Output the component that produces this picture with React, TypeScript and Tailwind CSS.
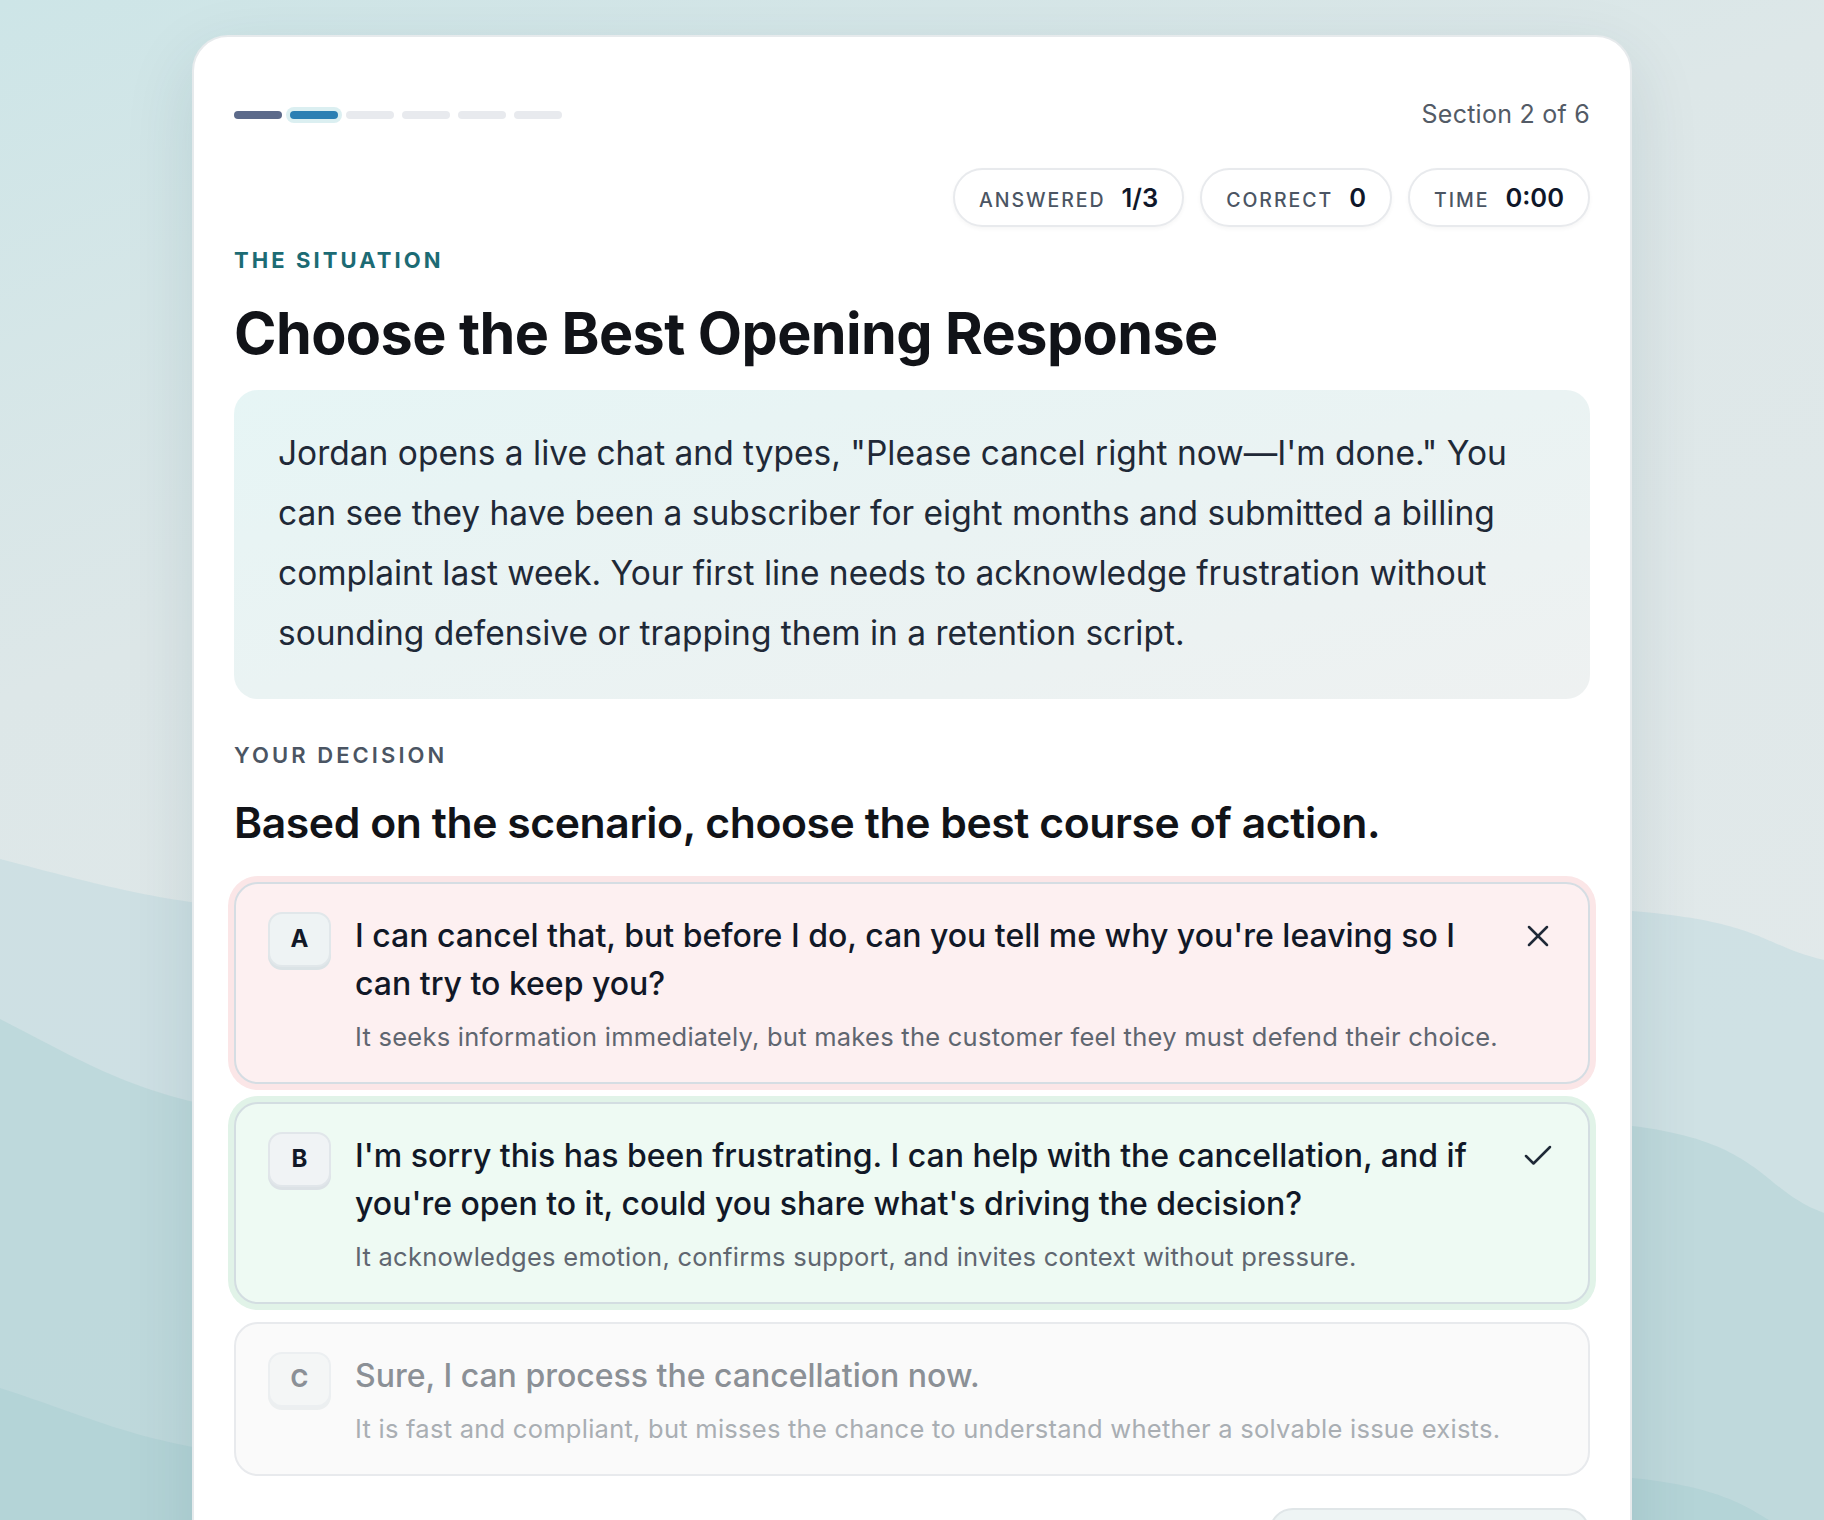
import { Check, X } from "lucide-react";

type OptionState = "wrong" | "right" | "idle";

interface Option {
  letter: string;
  text: string;
  note: string;
  state: OptionState;
}

const options: Option[] = [
  {
    letter: "A",
    text: "I can cancel that, but before I do, can you tell me why you're leaving so I can try to keep you?",
    note: "It seeks information immediately, but makes the customer feel they must defend their choice.",
    state: "wrong",
  },
  {
    letter: "B",
    text: "I'm sorry this has been frustrating. I can help with the cancellation, and if you're open to it, could you share what's driving the decision?",
    note: "It acknowledges emotion, confirms support, and invites context without pressure.",
    state: "right",
  },
  {
    letter: "C",
    text: "Sure, I can process the cancellation now.",
    note: "It is fast and compliant, but misses the chance to understand whether a solvable issue exists.",
    state: "idle",
  },
];

const cardStyles: Record<OptionState, string> = {
  wrong: "border-[#d5dde3] bg-[#fdf0f1] shadow-[0_0_0_6px_#fbe6e7]",
  right: "border-[#d3dde1] bg-[#eefaf3] shadow-[0_0_0_6px_#e1f3e8]",
  idle: "border-[#e8eaed] bg-[#fafafa]",
};

const badgeStyles: Record<OptionState, string> = {
  wrong: "border-[#e1e7ea] bg-[#eef3f4] text-[#111827] shadow-[0_3px_0_#dbe3e6]",
  right: "border-[#e1e6ea] bg-[#f0f3f5] text-[#111827] shadow-[0_3px_0_#dce2e6]",
  idle: "border-[#eceff1] bg-[#f4f6f6] text-[#8b9096] shadow-[0_3px_0_#eceff0]",
};

const textStyles: Record<OptionState, string> = {
  wrong: "text-[#111827]",
  right: "text-[#111827]",
  idle: "text-[#8b9096]",
};

const noteStyles: Record<OptionState, string> = {
  wrong: "text-[#5f6670]",
  right: "text-[#5f6670]",
  idle: "text-[#a9aeb3]",
};

const stats = [
  { label: "Answered", value: "1/3" },
  { label: "Correct", value: "0" },
  { label: "Time", value: "0:00" },
];

function ProgressBars({ total, current }: { total: number; current: number }) {
  return (
    <div className="flex items-center gap-[8px]">
      {Array.from({ length: total }).map((_, i) => {
        let cls = "bg-[#e8eaee]";
        if (i < current - 1) cls = "bg-[#5c6a8a]";
        if (i === current - 1) cls = "bg-[#2b7fb3] shadow-[0_0_0_4px_#dbeff1]";
        return <div key={i} className={`h-[8px] w-[48px] rounded-full ${cls}`} />;
      })}
    </div>
  );
}

function OptionCard({ option }: { option: Option }) {
  const { state } = option;
  return (
    <div className={`rounded-[24px] border-2 px-[32px] py-[28px] ${cardStyles[state]}`}>
      <div className="grid grid-cols-[63px_minmax(0,1fr)_36px] gap-x-[24px]">
        <div
          className={`row-span-2 flex h-[55px] w-[63px] items-center justify-center rounded-[14px] border-2 text-[24px] font-bold ${badgeStyles[state]}`}
        >
          {option.letter}
        </div>
        <p className={`pr-[16px] text-[32px] font-medium leading-[48px] ${textStyles[state]}`}>{option.text}</p>
        <div className="flex h-[48px] items-center justify-center text-[#1f2937]">
          {state === "wrong" && <X size={36} strokeWidth={1.7} />}
          {state === "right" && <Check size={36} strokeWidth={1.7} />}
        </div>
        <p
          className={`col-span-2 col-start-2 mt-[12px] text-[25.5px] leading-[34px] tracking-[0.01em] ${noteStyles[state]}`}
        >
          {option.note}
        </p>
      </div>
    </div>
  );
}

export default function App() {
  return (
    <div className="relative h-screen overflow-hidden bg-[linear-gradient(160deg,#cde5e7_0%,#dde7e8_32%,#e4eaeb_100%)] font-[family-name:Inter,ui-sans-serif,sans-serif]">
      {/* soft teal waves behind the card */}
      <svg
        className="absolute inset-0 h-full w-full"
        viewBox="0 0 1824 1520"
        preserveAspectRatio="none"
        aria-hidden="true"
      >
        <path
          d="M0 859 C120 890 170 905 300 912 S1500 900 1632 911 S1760 945 1824 960 L1824 1520 L0 1520 Z"
          fill="#c8dee1"
          opacity="0.75"
        />
        <path
          d="M0 1019 C100 1070 150 1105 300 1118 S1500 1110 1632 1126 S1760 1190 1824 1213 L1824 1520 L0 1520 Z"
          fill="#bad7da"
          opacity="0.8"
        />
        <path
          d="M0 1388 C100 1420 150 1450 300 1460 S1500 1465 1632 1478 S1760 1530 1824 1545 L1824 1520 L0 1520 Z"
          fill="#b2d3d6"
          opacity="0.9"
        />
      </svg>

      <main className="relative mx-auto mt-[35px] max-w-[1440px] rounded-[36px] border-2 border-[#e6eaec] bg-white px-[40px] pt-[61px] pb-[80px] shadow-[0_24px_70px_rgba(20,60,70,0.12)]">
        <header className="flex h-[33px] items-center justify-between">
          <ProgressBars total={6} current={2} />
          <span className="text-[25px] tracking-[0.01em] text-[#535b66]">Section 2 of 6</span>
        </header>

        <div className="mt-[37px] flex justify-end gap-[16px]">
          {stats.map((s) => (
            <div
              key={s.label}
              className="flex h-[59px] items-baseline gap-[16px] rounded-full border-2 border-[#e8eaed] bg-white px-[24px] pt-[9px] shadow-[0_2px_4px_rgba(0,0,0,0.04)]"
            >
              <span className="text-[19.5px] font-medium uppercase tracking-[0.1em] text-[#4b5563]">{s.label}</span>
              <span className="text-[25.5px] font-semibold text-[#0f172a]">{s.value}</span>
            </div>
          ))}
        </div>

        <p className="mt-[18px] text-[22px] font-bold uppercase leading-[31.5px] tracking-[0.14em] text-[#1c6b74]">
          The situation
        </p>
        <h1 className="mt-[24px] text-[57.5px] font-bold leading-[65px] tracking-[-0.01em] text-[#111318]">
          Choose the Best Opening Response
        </h1>

        <div className="mt-[24px] rounded-[24px] bg-linear-to-br from-[#e6f5f5] to-[#eef1f1] px-[44px] pt-[33px] pb-[36px]">
          <p className="text-[33.5px] leading-[60px] text-[#1f2937]">
            Jordan opens a live chat and types, "Please cancel right now—I'm done." You can see they have been a
            subscriber for eight months and submitted a billing complaint last week. Your first line needs to
            acknowledge frustration without sounding defensive or trapping them in a retention script.
          </p>
        </div>

        <p className="mt-[41px] text-[22px] font-semibold uppercase leading-[31.5px] tracking-[0.14em] text-[#4b5563]">
          Your decision
        </p>
        <h2 className="mt-[26px] text-[42.7px] font-semibold leading-[52.5px] tracking-[-0.01em] text-[#111318]">
          Based on the scenario, choose the best course of action.
        </h2>

        <div className="mt-[32px] flex flex-col gap-[18px]">
          {options.map((o) => (
            <OptionCard key={o.letter} option={o} />
          ))}
        </div>

        <div className="mt-[32px] flex justify-end">
          <button
            aria-label="Next scenario"
            className="h-[80px] w-[321px] rounded-[24px] border-2 border-[#e0e6e8] bg-[#eef4f4]"
          />
        </div>
      </main>
    </div>
  );
}
